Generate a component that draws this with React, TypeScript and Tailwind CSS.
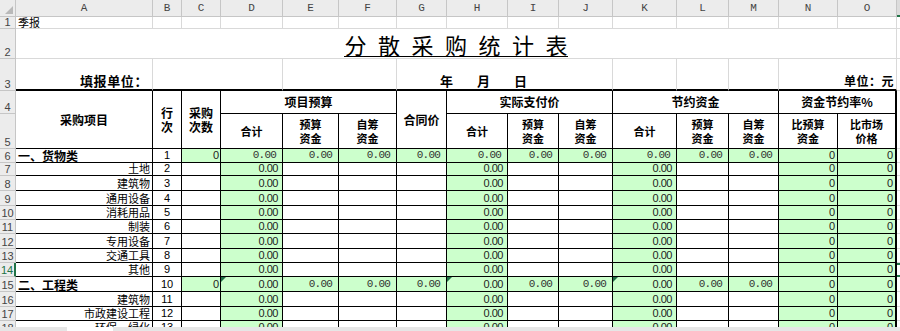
import React from "react";

const TB = "border-r border-b border-black";
const TBL = "border-r-2 border-b border-black";
const LG = "border-r border-b border-[#d9d9d9]";
const CJK = "font-['Noto_Sans_CJK_SC',sans-serif]";
const GREEN = "bg-[#ccffcc]";

const letters = ["A", "B", "C", "D", "E", "F", "G", "H", "I", "J", "K", "L", "M", "N", "O"];

function RowHead({ n, sel }: { n: number; sel?: boolean }) {
  if (sel) {
    return (
      <div className="bg-[#ececec] border-r-2 border-r-[#217346] border-b border-b-[#c6c6c6] flex items-end justify-center text-[11px] leading-[12px] text-[#217346]">
        {n}
      </div>
    );
  }
  return (
    <div className="bg-[#ececec] border-r border-b border-[#c6c6c6] flex items-end justify-center text-[11px] leading-[12px] text-[#444]">
      {n}
    </div>
  );
}

function Num({ tri }: { tri?: boolean }) {
  return (
    <div className={`${TB} ${GREEN} relative flex items-end justify-end pr-[4px] text-[11px] leading-[13px] tracking-[-0.5px] text-[#222]`}>
      {tri && (
        <span className="absolute left-0 top-0 w-0 h-0 border-t-[5px] border-r-[5px] border-t-[#1e7145] border-r-transparent" />
      )}
      0.00
    </div>
  );
}

function Mono() {
  return (
    <div className={`${TB} ${GREEN} flex items-end justify-end pr-[6px] font-['Liberation_Mono',monospace] text-[11px] leading-[13px] tracking-[-0.8px] text-[#333]`}>
      0.00
    </div>
  );
}

function Zero({ last }: { last?: boolean }) {
  return (
    <div className={`${last ? TBL : TB} ${GREEN} flex items-end justify-end pr-[2px] text-[11px] leading-[13px] text-[#222]`}>
      0
    </div>
  );
}

function Empty() {
  return <div className={TB} />;
}

function PCell({ sel }: { sel?: boolean }) {
  if (sel) return <div className="border-t-2 border-b-2 border-[#217346]" />;
  return <div className="border-b border-[#d9d9d9]" />;
}

function DataRow({ n, name, i, sel }: { n: number; name: string; i: number; sel?: boolean }) {
  return (
    <>
      <RowHead n={n} sel={sel} />
      <div className={`${TB} flex items-end justify-end pr-[2px] text-[11px] leading-[13px] ${CJK}`}>{name}</div>
      <div className={`${TB} flex items-end justify-center text-[11px] leading-[13px]`}>{i}</div>
      <Empty />
      <Num />
      <Empty />
      <Empty />
      <Empty />
      <Num />
      <Empty />
      <Empty />
      <Num />
      <Empty />
      <Empty />
      <Zero />
      <Zero last />
      <PCell sel={sel} />
    </>
  );
}

function CatRow({ n, name, i, variant }: { n: number; name: string; i: number; variant: 1 | 2 }) {
  return (
    <>
      <RowHead n={n} />
      <div className={`${TB} flex items-end pl-[2px] text-[12px] leading-[13px] font-bold ${CJK}`}>{name}</div>
      <div className={`${TB} flex items-end justify-center text-[11px] leading-[13px]`}>{i}</div>
      <div className={`${TB} ${GREEN} flex items-end justify-end pr-[1px] text-[11px] leading-[13px] text-[#222]`}>0</div>
      {variant === 1 ? <Mono /> : <Num tri />}
      <Mono />
      <Mono />
      <Mono />
      {variant === 1 ? <Mono /> : <Num tri />}
      <Mono />
      <Mono />
      {variant === 1 ? <Mono /> : <Num tri />}
      <Mono />
      <Mono />
      <Zero />
      <Zero last />
      <PCell />
    </>
  );
}

const HDR = `${TB} flex items-center justify-center text-center font-bold text-[12px] leading-[14px] ${CJK}`;
const HDRL = `${TBL} flex items-center justify-center text-center font-bold text-[12px] leading-[14px] ${CJK}`;
const SUB = `${TB} flex items-center justify-center text-center font-bold text-[11px] leading-[14px] ${CJK}`;
const SUBL = `${TBL} flex items-center justify-center text-center font-bold text-[11px] leading-[14px] ${CJK}`;

const title = ["分", "散", "采", "购", "统", "计", "表"];

export default function App() {
  const rowsA = [
    { n: 7, name: "土地", i: 2 },
    { n: 8, name: "建筑物", i: 3 },
    { n: 9, name: "通用设备", i: 4 },
    { n: 10, name: "消耗用品", i: 5 },
    { n: 11, name: "制装", i: 6 },
    { n: 12, name: "专用设备", i: 7 },
    { n: 13, name: "交通工具", i: 8 },
    { n: 14, name: "其他", i: 9, sel: true },
  ];
  const rowsB = [
    { n: 16, name: "建筑物", i: 11 },
    { n: 17, name: "市政建设工程", i: 12 },
    { n: 18, name: "环保、绿化", i: 13 },
  ];
  return (
    <div className="w-[900px] h-[331px] overflow-hidden bg-white text-black font-['Liberation_Sans','Noto_Sans_CJK_SC',sans-serif]">
      <div className="h-[327px] overflow-hidden">
        <div className="grid grid-cols-[16px_137px_29px_39px_62px_56px_58px_50px_61px_51px_54px_64px_52px_50px_59px_59px_3px] grid-rows-[17px_12px_30px_32px_23px_35px_14px_13px_15px_15px_14px_14px_15px_14px_14px_15px_15px_14px_14px]">
          {/* column header row */}
          <div className="bg-[#ececec] border-r border-b border-[#c6c6c6] relative">
            <span className="absolute right-[2px] bottom-[2px] w-0 h-0 border-b-[8px] border-l-[8px] border-b-[#b9b9b9] border-l-transparent" />
          </div>
          {letters.map((l) => (
            <div
              key={l}
              className="bg-[#ececec] border-r border-b border-[#c6c6c6] flex items-center justify-center text-[11px] text-[#444] font-['Liberation_Mono',monospace]"
            >
              {l}
            </div>
          ))}
          <div className="bg-[#dcdcdc] border-b-2 border-[#217346]" />

          {/* row 1 */}
          <RowHead n={1} />
          <div className={`${LG} flex items-end pl-[2px] text-[11px] leading-[12px] ${CJK}`}>季报</div>
          {letters.slice(1).map((l) => (
            <div key={l} className={LG} />
          ))}
          <PCell />

          {/* row 2 */}
          <RowHead n={2} />
          <div className={`${LG} col-span-15 flex items-end justify-center pb-[1px]`}>
            <div className={`flex gap-[11.5px] border-b-[1.5px] border-black text-[22px] leading-[24px] ${CJK}`}>
              {title.map((c) => (
                <span key={c}>{c}</span>
              ))}
            </div>
          </div>
          <PCell />

          {/* row 3 */}
          <RowHead n={3} />
          <div className={`border-r border-b-2 border-r-[#d9d9d9] border-b-black flex items-end justify-end pr-[4px] pb-[1px] text-[13px] leading-[14px] font-bold tracking-[0.6px] ${CJK}`}>
            填报单位：
          </div>
          <div className="col-span-3 border-r border-b-2 border-r-[#d9d9d9] border-b-black" />
          <div className="col-span-2 border-r border-b-2 border-r-[#d9d9d9] border-b-black" />
          <div className={`col-span-4 border-r border-b-2 border-r-[#d9d9d9] border-b-black flex items-end pl-[43px] pb-[1px] gap-[24px] text-[13px] leading-[14px] font-bold ${CJK}`}>
            <span>年</span>
            <span>月</span>
            <span>日</span>
          </div>
          <div className="border-r border-b-2 border-r-[#d9d9d9] border-b-black" />
          <div className="border-r border-b-2 border-r-[#d9d9d9] border-b-black" />
          <div className="border-r border-b-2 border-r-[#d9d9d9] border-b-black" />
          <div className={`col-span-2 border-r border-b-2 border-r-[#d9d9d9] border-b-black flex items-end justify-end pr-[2px] pb-[1px] text-[12px] leading-[14px] font-bold tracking-[0.5px] ${CJK}`}>
            单位：元
          </div>
          <PCell />

          {/* row 4 */}
          <RowHead n={4} />
          <div className={`${HDR} row-span-2`}>采购项目</div>
          <div className={`${HDR} row-span-2`}>
            行<br />次
          </div>
          <div className={`${HDR} row-span-2`}>
            采购<br />次数
          </div>
          <div className={`${HDR} col-span-3`}>项目预算</div>
          <div className={`${HDR} row-span-2`}>合同价</div>
          <div className={`${HDR} col-span-3`}>实际支付价</div>
          <div className={`${HDR} col-span-3`}>节约资金</div>
          <div className={`${HDRL} col-span-2`}>资金节约率%</div>
          <div className="row-span-2 border-b border-[#d9d9d9]" />

          {/* row 5 */}
          <RowHead n={5} />
          <div className={SUB}>合计</div>
          <div className={SUB}>
            预算<br />资金
          </div>
          <div className={SUB}>
            自筹<br />资金
          </div>
          <div className={SUB}>合计</div>
          <div className={SUB}>
            预算<br />资金
          </div>
          <div className={SUB}>
            自筹<br />资金
          </div>
          <div className={SUB}>合计</div>
          <div className={SUB}>
            预算<br />资金
          </div>
          <div className={SUB}>
            自筹<br />资金
          </div>
          <div className={SUB}>
            比预算<br />资金
          </div>
          <div className={SUBL}>
            比市场<br />价格
          </div>

          {/* data */}
          <CatRow n={6} name="一、货物类" i={1} variant={1} />
          {rowsA.map((r) => (
            <DataRow key={r.n} n={r.n} name={r.name} i={r.i} sel={r.sel} />
          ))}
          <CatRow n={15} name="二、工程类" i={10} variant={2} />
          {rowsB.map((r) => (
            <DataRow key={r.n} n={r.n} name={r.name} i={r.i} />
          ))}
        </div>
      </div>
      <div className="h-[4px] bg-[#e6e6e6] flex">
        <div className="ml-[67px] w-[46px] bg-white" />
      </div>
    </div>
  );
}
